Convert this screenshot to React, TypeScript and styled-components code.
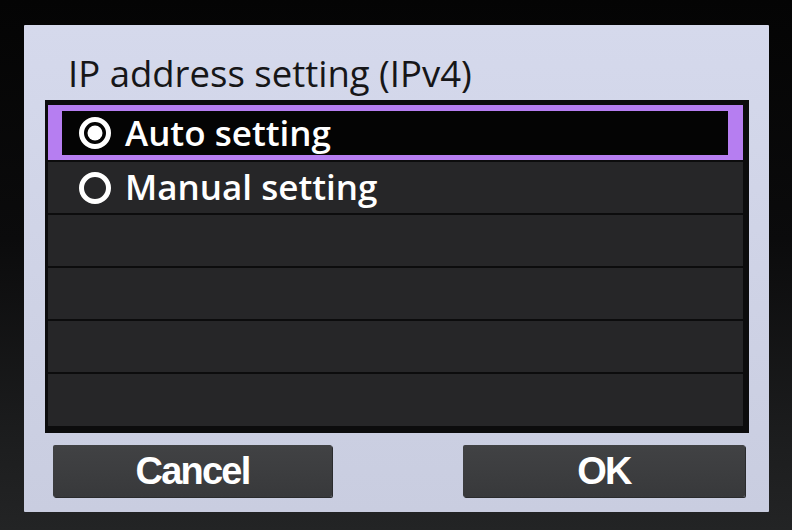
import { createGlobalStyle, styled } from "styled-components";

const GlobalStyle = createGlobalStyle`
  html, body {
    margin: 0;
    padding: 0;
    background: #060606;
  }
`;

const Screen = styled.div`
  width: 792px;
  height: 530px;
  box-sizing: border-box;
  padding: 25px 23px 18px 24px;
  background: linear-gradient(180deg, #040404 0%, #0b0b0c 45%, #1d1e1f 85%, #232425 100%);
  overflow: hidden;
`;

const Panel = styled.div`
  height: 100%;
  box-sizing: border-box;
  padding: 0 20px 15px 21px;
  display: flex;
  flex-direction: column;
  background: linear-gradient(180deg, #d5d9ec 0%, #cfd3e6 50%, #c9cde0 100%);
  border-radius: 1px;
`;

const Title = styled.h1`
  margin: 0 0 7px;
  padding: 28px 0 0 23px;
  height: 40px;
  line-height: 40px;
  font-family: "Open Sans", "Noto Sans", sans-serif;
  font-size: 36.5px;
  font-weight: 400;
  color: #161618;
  white-space: nowrap;
`;

const List = styled.div`
  height: 333px;
  box-sizing: border-box;
  padding: 5px 6px 7px 3px;
  background: #0c0c0d;
  display: grid;
  grid-template-rows: 55px 51px 51px 51px 51px 52px;
  row-gap: 2px;
`;

const Row = styled.div<{ $selected?: boolean }>`
  display: flex;
  align-items: center;
  gap: 14px;
  box-sizing: border-box;
  padding-left: ${(p) => (p.$selected ? "17px" : "31px")};
  background: ${(p) => (p.$selected ? "#040404" : "#262628")};
  border-style: solid;
  border-color: #b67ef1;
  border-width: ${(p) => (p.$selected ? "6px 15px 5px 14px" : "0")};
`;

const Label = styled.span`
  font-family: "Open Sans", "Noto Sans", sans-serif;
  font-size: 35px;
  font-weight: 600;
  color: #ffffff;
  line-height: 1;
  white-space: nowrap;
  margin-top: -2px;
`;

const Buttons = styled.div`
  display: flex;
  justify-content: space-between;
  margin-top: 12px;
  padding: 0 4px 0 8px;
`;

const Button = styled.button<{ $width: number }>`
  width: ${(p) => p.$width}px;
  height: 52px;
  border: none;
  border-radius: 2px;
  background: linear-gradient(180deg, #414244 0%, #38393b 100%);
  box-shadow: 1px 1px 0 #2a2b2d;
  color: #ffffff;
  font-family: "Liberation Sans", Arial, sans-serif;
  font-size: 38px;
  font-weight: 700;
  letter-spacing: -1.8px;
  padding: 0;
  cursor: pointer;
`;

function Radio({ checked }: { checked?: boolean }) {
  return (
    <svg width="32" height="32" viewBox="0 0 32 32">
      <circle cx="16" cy="16" r="13.5" fill="none" stroke="#fff" strokeWidth="5" />
      {checked && <circle cx="16" cy="16" r="7.5" fill="#fff" />}
    </svg>
  );
}

const options = ["Auto setting", "Manual setting"];

export default function App() {
  return (
    <>
      <GlobalStyle />
      <Screen>
        <Panel>
          <Title>IP address setting (IPv4)</Title>
          <List>
            {options.map((opt, i) => (
              <Row key={opt} $selected={i === 0}>
                <Radio checked={i === 0} />
                <Label>{opt}</Label>
              </Row>
            ))}
            {[0, 1, 2, 3].map((n) => (
              <Row key={n} />
            ))}
          </List>
          <Buttons>
            <Button $width={279}>Cancel</Button>
            <Button $width={282}>OK</Button>
          </Buttons>
        </Panel>
      </Screen>
    </>
  );
}
